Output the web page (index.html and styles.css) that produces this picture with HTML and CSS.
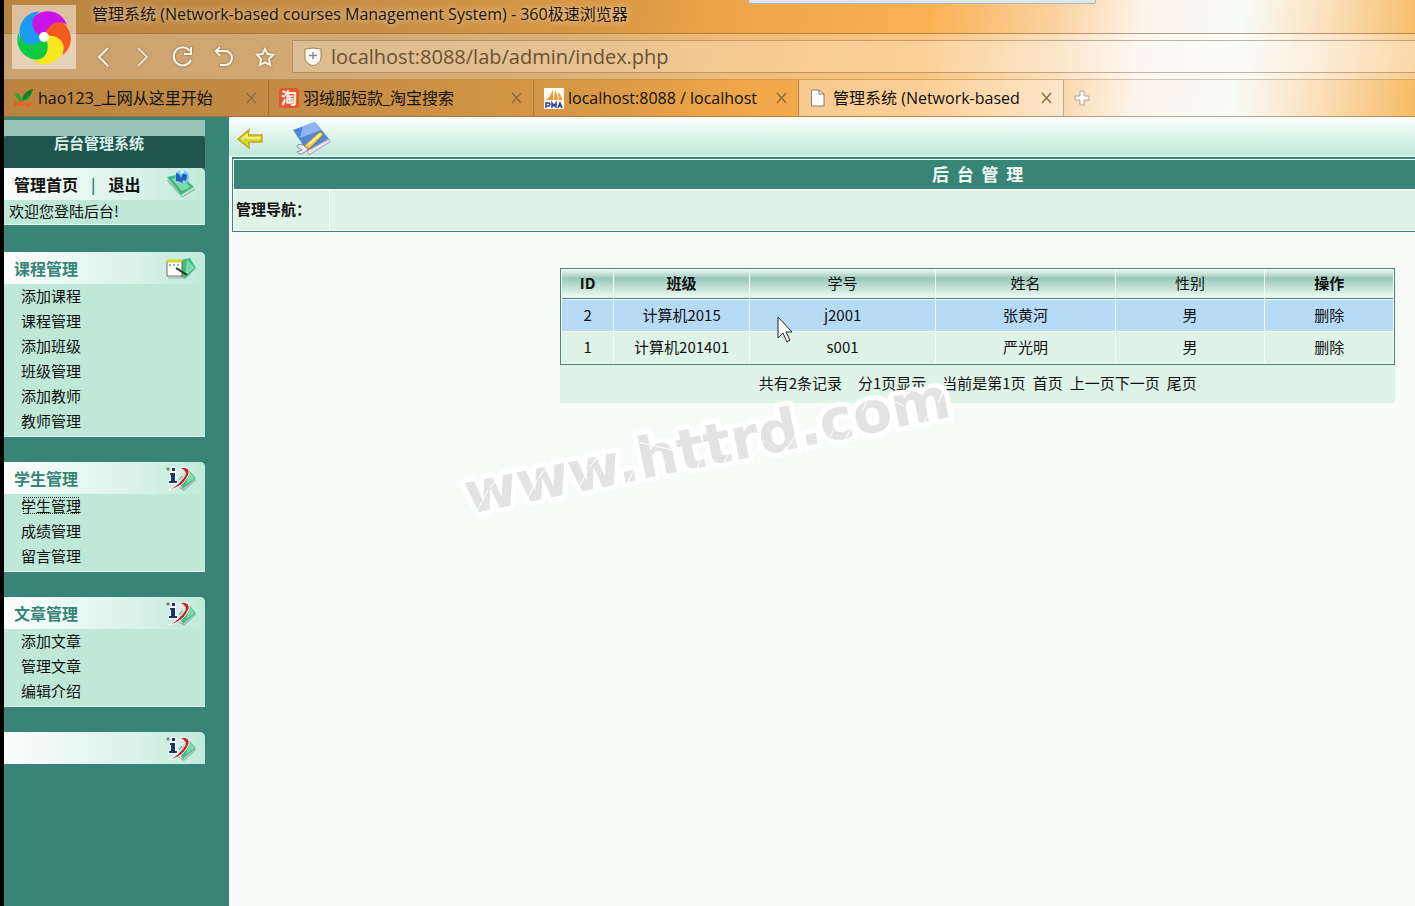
FILE: index.html
```
<!DOCTYPE html>
<html lang="zh-CN">
<head>
<meta charset="utf-8">
<title>管理系统 (Network-based courses Management System)</title>
<link rel="stylesheet" href="styles.css">
</head>
<body>
<svg class="defs" aria-hidden="true">
  <defs>
    <path id="petal" d="M32 32C22 30 16 17 24 10C33 3 50 5 55 20C47 14 36 18 32 32Z"/>
    <g id="close-x"><path d="M1 1L10 11M10 1L1 11" fill="none" stroke="#8c6c45" stroke-width="1.5"/></g>
    <g id="seal">
      <path d="M11 22L19 27L31 16L29 13L14 19Z" fill="#a3b5aa"/>
      <path d="M5 4L24 3L31 14L19 25L8 20Z" fill="#d5f1e3"/>
      <path d="M23 5L31 14L18 25L14 19Z" fill="#48b987"/>
      <path d="M25 8L30 14L21 20Z" fill="#7bdcab"/>
      <path d="M14 5C20 1 27 5 23 12C19 20 13 24 4 26C11 22 17 17 20 11C21 7 18 5 14 5Z" fill="#c3262c" stroke="#fff" stroke-width="1"/>
      <path d="M5 9h5v8h2v2H4v-2h2v-6H5ZM7 4h3v3H7Z" fill="#17346f" stroke="#fff" stroke-width="2" paint-order="stroke"/>
      <path d="M2 4h2v2H2ZM14 16l3-4" stroke="#71887d" fill="#71887d"/>
    </g>
  </defs>
</svg>

<header class="chrome">
  <div class="popup-edge"></div>
  <button class="logo" aria-label="浏览器菜单">
    <svg viewBox="0 0 64 64">
      <use href="#petal" fill="#f4591f" transform="rotate(72 32 32)"/>
      <use href="#petal" fill="#f7e91c" transform="rotate(144 32 32)"/>
      <use href="#petal" fill="#12c945" transform="rotate(216 32 32)"/>
      <use href="#petal" fill="#1a9cf2" transform="rotate(288 32 32)"/>
      <use href="#petal" fill="#c814ea"/>
      <circle cx="32" cy="32" r="5" fill="#fff"/>
    </svg>
  </button>
  <div class="titlebar">管理系统 (Network-based courses Management System) - 360极速浏览器</div>
  <div class="navbar">
    <button aria-label="后退"><svg width="24" height="24" viewBox="0 0 24 24"><path d="M16 3L7 12L16 21"/></svg></button>
    <button class="dim" aria-label="前进"><svg width="24" height="24" viewBox="0 0 24 24"><path d="M6 3L15 12L6 21"/></svg></button>
    <button aria-label="刷新"><svg width="24" height="24" viewBox="0 0 24 24"><path d="M18 6A9 9 0 1 0 19 15M19 2V9H12"/></svg></button>
    <button aria-label="恢复"><svg width="24" height="24" viewBox="0 0 24 24"><path d="M8 2L4 6L8 11M4 6H13A7 7 0 0 1 13 20H8"/></svg></button>
    <button class="thin" aria-label="收藏"><svg width="24" height="24" viewBox="0 0 24 24"><path d="M13 4L15.500 9L21 9.700L17 14L18 20L13 17.300L8 20L9 14L5 9.700L10.500 9Z"/></svg></button>
    <label class="address">
      <svg width="20" height="20" viewBox="0 0 20 20"><path d="M2 2Q10 0 18 2V11Q18 16 10 19Q2 16 2 11Z" fill="#fffaf0" stroke="#a08058"/><path d="M10 5V12M6 8.500H14" stroke="#7b8ba0" stroke-width="1.500"/></svg>
      <input type="text" value="localhost:8088/lab/admin/index.php" aria-label="地址">
    </label>
  </div>
  <nav class="tabs">
    <div class="tab">
      <svg width="20" height="20" viewBox="0 0 20 20"><path d="M1 5Q7 5 8 12Q10 3 19 1Q17 12 8 14Q2 12 1 5Z" fill="#28a62d"/><path d="M8 12Q10 3 19 1Q17 10 8 12Z" fill="#147c2b"/><path d="M1 18V13M1 15H4V18M6 18V14H9V18M12 14V18H15V14M18 18V14" fill="none" stroke="#e4632a" stroke-width="2"/></svg>
      <button class="tab-title">hao123_上网从这里开始</button>
      <button class="tab-close" aria-label="关闭"><svg width="11" height="12"><use href="#close-x"/></svg></button>
    </div>
    <div class="tab">
      <span class="taobao">淘</span>
      <button class="tab-title">羽绒服短款_淘宝搜索</button>
      <button class="tab-close" aria-label="关闭"><svg width="11" height="12"><use href="#close-x"/></svg></button>
    </div>
    <div class="tab">
      <svg width="20" height="21" viewBox="0 0 20 21"><path d="M0 0H20V21H0Z" fill="#fffdf8"/><path d="M9 1V12H2Q7 8 9 1ZM11 2Q14 8 14 12H10ZM14 4Q18 8 18 12H15Z" fill="#f29a2d"/><path d="M2 20V15H5Q7 16 5 18H2M8 20V15L10 18L12 15V20M14 20L16 15L18 20M15 18H17" fill="none" stroke="#343a99" stroke-width="1.500"/></svg>
      <button class="tab-title">localhost:8088 / localhost</button>
      <button class="tab-close" aria-label="关闭"><svg width="11" height="12"><use href="#close-x"/></svg></button>
    </div>
    <div class="tab active">
      <svg width="20" height="18" viewBox="0 0 20 18"><path d="M2.500 1H10L15 5V17H2.500Z" fill="#fbfdf9" stroke="#8a8170"/><path d="M10 1V5H15" fill="none" stroke="#8a8170"/></svg>
      <button class="tab-title">管理系统 (Network-based</button>
      <button class="tab-close" aria-label="关闭"><svg width="11" height="12"><use href="#close-x"/></svg></button>
    </div>
    <button class="new-tab" aria-label="新标签页"><svg width="16" height="16" viewBox="0 0 16 16"><path d="M6 1H10V6H15V10H10V15H6V10H1V6H6Z" fill="#fffdf8" stroke="#b3a28c"/></svg></button>
  </nav>
</header>

<div class="page">
  <aside class="sidebar">
    <div class="cap"></div>
    <h1>后台管理系统</h1>
    <section class="panel account">
      <div class="panel-head">
        <a href="#">管理首页</a><span>|</span><a href="#">退出</a>
        <svg width="32" height="30" viewBox="0 0 32 30"><path d="M3 10L17 27L30 19V21L17 29L2 12Z" fill="#a6bdb0"/><path d="M2 8L15 5L29 18L16 26Z" fill="#43ba7f"/><path d="M7 10L16 8L25 18L17 22Z" fill="#7edca4"/><circle cx="17" cy="8" r="7" fill="#80c4f5"/><path d="M11 4L14 5L16 9L18 4L22 6L21 12L18 11L17 14L14 12L11 12Z" fill="#1d61bb"/><circle cx="17" cy="3" r="2" fill="#d7f4ff"/></svg>
      </div>
      <p>欢迎您登陆后台!</p>
    </section>
    <section class="panel">
      <div class="panel-head"><h2>课程管理</h2>
        <svg width="32" height="28" viewBox="0 0 32 28"><path d="M12 7L25 4L31 14L20 25L11 20Z" fill="#43ba7f"/><path d="M22 6L30 14L20 22Z" fill="#7bdcab"/><path d="M2 7H17V22H2Z" fill="#fff" stroke="#6c6e55"/><path d="M2 7H17" stroke="#d8d523" stroke-width="3"/><path d="M4 11H16" stroke="#555" stroke-dasharray="2 2"/><path d="M11 14L22 21" stroke="#252b22" stroke-width="2"/><path d="M3 24H20" stroke="#aaa"/></svg>
      </div>
      <ul><li><a href="#">添加课程</a></li><li><a href="#">课程管理</a></li><li><a href="#">添加班级</a></li><li><a href="#">班级管理</a></li><li><a href="#">添加教师</a></li><li><a href="#">教师管理</a></li></ul>
    </section>
    <section class="panel">
      <div class="panel-head"><h2>学生管理</h2><svg width="32" height="28" viewBox="0 0 32 28"><use href="#seal"/></svg></div>
      <ul><li><a class="current" href="#">学生管理</a></li><li><a href="#">成绩管理</a></li><li><a href="#">留言管理</a></li></ul>
    </section>
    <section class="panel">
      <div class="panel-head"><h2>文章管理</h2><svg width="32" height="28" viewBox="0 0 32 28"><use href="#seal"/></svg></div>
      <ul><li><a href="#">添加文章</a></li><li><a href="#">管理文章</a></li><li><a href="#">编辑介绍</a></li></ul>
    </section>
    <section class="panel">
      <div class="panel-head"><svg width="32" height="28" viewBox="0 0 32 28"><use href="#seal"/></svg></div>
    </section>
  </aside>

  <main class="main">
    <div class="toolbar">
      <button aria-label="返回"><svg width="28" height="24" viewBox="0 0 28 24"><path d="M1 12L12 3L11 8H25V15H12V21Z" fill="#c7df32" stroke="#d49b24" stroke-width="1.500"/><path d="M5 12L10 8V11H23" fill="none" stroke="#f4ef79" stroke-width="2"/></svg></button>
      <button aria-label="设置"><svg width="42" height="36" viewBox="0 0 42 36"><path d="M1 9L23 1L37 18L15 30Z" fill="#5088d6"/><path d="M11 5L23 1L29 9L8 17Z" fill="#8eb6ed"/><path d="M15 30L37 18L38 21L17 34Z" fill="#e5e4ed" stroke="#a29caf"/><path d="M12 25L26 12Q30 10 31 14L17 28Z" fill="#f4c94e" stroke="#a68031"/><path d="M16 24L29 13" stroke="#fff2a2" stroke-width="2"/><path d="M5 26Q6 22 11 24L16 28L13 31Q7 35 5 31L10 29Z" fill="#eff0f3" stroke="#8b8994"/></svg></button>
    </div>
    <div class="content">
      <section class="frame">
        <h2>后&nbsp; 台&nbsp; 管&nbsp; 理</h2>
        <div class="guide"><strong>管理导航：</strong><span></span></div>
      </section>
      <section class="listing">
        <table>
          <colgroup><col class="c-id"><col class="c-class"><col class="c-no"><col class="c-name"><col class="c-sex"><col class="c-op"></colgroup>
          <thead><tr><th class="strong">ID</th><th class="strong">班级</th><th>学号</th><th>姓名</th><th>性别</th><th class="strong">操作</th></tr></thead>
          <tbody>
            <tr class="hover"><td>2</td><td>计算机2015</td><td>j2001</td><td>张黄河</td><td>男</td><td><a href="#">删除</a></td></tr>
            <tr><td>1</td><td>计算机201401</td><td>s001</td><td>严光明</td><td>男</td><td><a href="#">删除</a></td></tr>
          </tbody>
        </table>
        <div class="pager">
          <div class="counts"><span>共有2条记录</span><span>分1页显示</span><span>当前是第1页</span></div>
          <a href="#">首页</a><span><a href="#">上一页</a><a href="#">下一页</a></span><a href="#">尾页</a>
        </div>
      </section>
    </div>
    <svg class="watermark" width="500" height="170" viewBox="0 0 500 170">
      <g transform="rotate(-11.4 10 145)">
        <text x="10" y="144">www.httrd.com</text>
        <path d="M16 146L34 124M36 122L56 106M66 146L84 124M86 122L104 106M118 146L136 124M138 122L156 106M170 147L180 134M192 108L224 122M240 148L254 128M268 147L284 127M300 146L314 130M330 148L358 118M374 147L384 134M394 145L408 128M416 121L424 109M434 108L458 124M472 148L488 126M492 128L506 108"/>
      </g>
    </svg>
    <svg class="cursor" width="16" height="28" viewBox="0 0 16 28"><path d="M1 1V22L6 17L10 26L13 24L9 16H15Z" fill="#fff" stroke="#222"/></svg>
  </main>
</div>
</body>
</html>
```
FILE: styles.css
```
* { box-sizing: border-box; }
body {
  margin: 0;
  min-height: 100vh;
  display: flex;
  flex-direction: column;
  overflow: hidden;
  border-left: 4px solid #000;
  background: #f7fcf8;
  color: #111;
  font: 15px/25px "Noto Sans CJK SC", sans-serif;
}
button { border: 0; padding: 0; background: none; font: inherit; color: inherit; }
a { color: inherit; text-decoration: none; }
h1, h2, p, ul { margin: 0; padding: 0; }
ul { list-style: none; }
svg { display: block; flex: none; }
.defs { position: absolute; width: 0; height: 0; }

/* browser chrome */
.chrome {
  position: relative;
  background: linear-gradient(97deg, #b98340 0%, #c48c45 22%, #d89845 42%, #f0a748 53%, #fab154 65%, #fbd3a0 74%, #fdf4ea 80%, #f9fcf8 87%, #fbe0bb 93%, #f7bb63 100%);
  font-family: "Open Sans", "Noto Sans CJK SC", sans-serif;
  font-size: 16px;
}
.popup-edge {
  position: absolute;
  top: 0;
  right: 319px;
  width: 348px;
  height: 4px;
  border: 1px solid #aab5b6;
  border-top: 0;
  border-radius: 0 0 3px 3px;
  background: #dde9ec;
}
.logo {
  position: absolute;
  top: 5px;
  left: 8px;
  width: 64px;
  height: 64px;
  background: rgba(255, 255, 255, .5);
}
.titlebar {
  height: 33px;
  padding-left: 88px;
  line-height: 28px;
  color: #1f160b;
  text-shadow: 0 0 6px rgba(255, 255, 255, .8);
  white-space: nowrap;
}
.navbar {
  display: flex;
  align-items: center;
  gap: 16px;
  height: 47px;
  padding-left: 88px;
  border-top: 1px solid rgba(110, 75, 35, .5);
  border-bottom: 1px solid rgba(110, 75, 35, .3);
  background: rgba(255, 255, 255, .25);
}
.navbar button svg {
  fill: none;
  stroke: #fff8ec;
  stroke-width: 2;
  filter: drop-shadow(0 0 1px #7b5c37);
}
.navbar .dim svg { opacity: .7; }
.address {
  flex: 1;
  display: flex;
  align-items: center;
  gap: 8px;
  height: 33px;
  padding-left: 10px;
  border: 1px solid rgba(110, 75, 35, .4);
  border-right: 0;
  background: rgba(255, 255, 255, .22);
}
.address input {
  flex: 1;
  min-width: 0;
  border: 0;
  padding: 0;
  background: none;
  outline: 0;
  font: 20px/28px "Open Sans", sans-serif;
  color: #6b5233;
}
.tabs {
  display: flex;
  height: 37px;
  border-bottom: 1px solid rgba(130, 90, 45, .5);
}
.tab {
  display: flex;
  align-items: center;
  gap: 4px;
  width: 265px;
  padding: 0 11px 0 10px;
  border-right: 1px solid rgba(110, 75, 35, .4);
}
.tab.active { background: rgba(255, 255, 255, .38); }
.tab-title { flex: 1; text-align: left; white-space: nowrap; }
.taobao {
  width: 20px;
  border-radius: 3px;
  background: #e8542b;
  color: #fff;
  text-align: center;
  font-weight: 700;
  line-height: 20px;
}
.new-tab { padding: 0 10px; }

/* layout */
.page { flex: 1; display: flex; }
.sidebar {
  flex: none;
  width: 225px;
  padding: 2px 24px 0 0;
  background: #388477;
}
.cap { height: 16px; margin-top: 1px; background: #98c4b8; }
.sidebar h1 {
  height: 32px;
  padding-left: 50px;
  border-radius: 4px 4px 0 0;
  background: #20554f;
  color: #d8efe6;
  font-size: 15px;
  line-height: 14px;
}
.panel {
  margin-bottom: 25px;
  border-radius: 0 5px 0 0;
  background: #bfe8d8;
  overflow: hidden;
}
.panel-head {
  display: flex;
  align-items: center;
  height: 32px;
  padding: 0 8px 0 10px;
  background: linear-gradient(90deg, #fcfefc, #d9f3e9 65%, #c0e9da);
}
.panel-head svg { margin-left: auto; }
.panel h2 { color: #388477; font-size: 16px; }
.panel ul { padding: 0 17px 2px; border-bottom: 1px solid #e3f6ee; line-height: 24px; }
.panel li { height: 25px; }
.current { outline: 1px dotted #333; outline-offset: -3px; }
.account { margin-bottom: 27px; }
.account a { font-size: 16px; font-weight: 700; }
.account span { padding: 0 13px; color: #388477; font-weight: 700; }
.account p { height: 25px; padding-left: 5px; border-bottom: 1px solid #e3f6ee; line-height: 21px; }

.main { position: relative; flex: 1; min-width: 0; overflow: hidden; }
.toolbar {
  display: flex;
  align-items: center;
  gap: 27px;
  height: 40px;
  padding: 4px 8px 0;
  background: linear-gradient(#fcfefc, #c1e9da 94%, #eef9f4);
}
/* the content sheet runs on past the right edge of the window */
.content { width: 126%; padding-left: 3px; }
.frame { border: 1px solid #388477; border-top-width: 2px; padding: 1px; background: #fff; }
.frame h2 {
  height: 29px;
  background: #388477;
  color: #f4fcf8;
  font-size: 17px;
  line-height: 27px;
  text-align: center;
}
.guide { display: flex; gap: 1px; height: 41px; padding-top: 1px; line-height: 37px; }
.guide strong { width: 95px; padding-left: 2px; background: #dff3e7; white-space: nowrap; }
.guide span { flex: 1; background: #dff3e7; }

.listing { width: 56%; margin: 36px auto 0; }
table {
  width: 100%;
  table-layout: fixed;
  border: 1px solid #4b8577;
  border-collapse: separate;
  border-spacing: 1px;
  background: #f4fcf8;
  text-align: center;
}
.c-id { width: 51px; }
.c-class { width: 135px; }
.c-no { width: 185px; }
.c-name { width: 179px; }
.c-sex { width: 148px; }
th {
  height: 29px;
  padding: 0 0 3px;
  border-bottom: 1px solid #4b8577;
  background: linear-gradient(#e8f6ef, #9cc8bc 30%, #e4f5ec 90%);
  font-weight: 400;
}
th.strong { font-weight: 700; }
td { height: 31px; padding: 0 0 3px; background: #dff3e7; }
.hover td { background: #b7daf7; }
.pager {
  display: flex;
  justify-content: center;
  gap: 7px;
  height: 38px;
  background: #dff3e7;
  line-height: 35px;
}
.counts { display: flex; gap: 16px; }

.watermark { position: absolute; top: 253px; left: 230px; overflow: visible; }
.watermark text {
  font: 700 57px "DejaVu Sans", sans-serif;
  fill: #e3e3e3;
  stroke: #fff;
  stroke-width: 10px;
  stroke-linejoin: round;
  paint-order: stroke;
}
.watermark path { stroke: #fff; stroke-width: 1px; }
.cursor { position: absolute; top: 199px; left: 548px; }
```
